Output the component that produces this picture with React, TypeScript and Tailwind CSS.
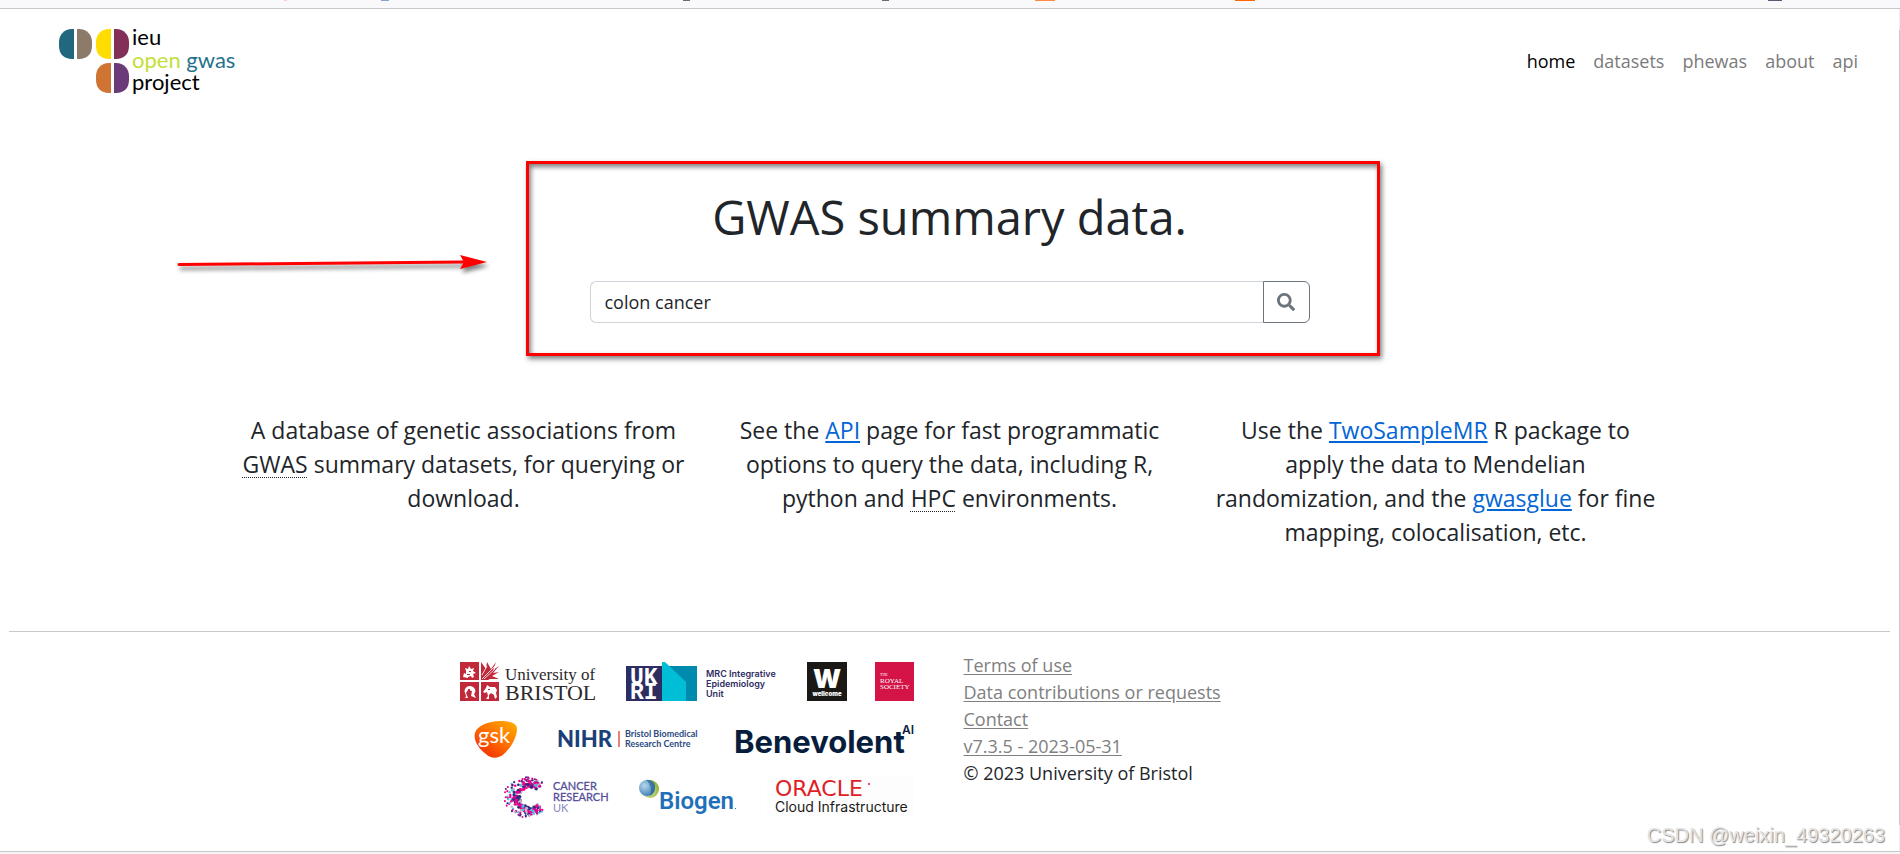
import { useState } from "react";
import { FaSearch } from "react-icons/fa";

const navLinks = [
  { label: "home", active: true },
  { label: "datasets", active: false },
  { label: "phewas", active: false },
  { label: "about", active: false },
  { label: "api", active: false },
];

const footerLinks = [
  "Terms of use",
  "Data contributions or requests",
  "Contact",
  "v7.3.5 - 2023-05-31",
];

// lower edges of the tab icons, one pixel high
const tabIcons = [
  { x: 284, w: 3, color: "#f8c9d8" },
  { x: 381, w: 8, color: "#8ba3d3" },
  { x: 683, w: 7, color: "#6b6b76" },
  { x: 882, w: 7, color: "#6b6b76" },
  { x: 1035, w: 20, color: "#ff8a47" },
  { x: 1235, w: 20, color: "#ff6600" },
  { x: 1768, w: 14, color: "#5f5870" },
];

const crukColors = ["#2e2d83", "#ec008c", "#2e2d83", "#ec008c", "#b9b9c4", "#ec008c", "#4fc3ee"];

function noise(n: number) {
  const value = Math.sin(n * 12.9898) * 43758.5453;
  return value - Math.floor(value);
}

// dots that make up the "C", spread over an arc and thinning out to the left
const crukDots = Array.from({ length: 230 }, (_, i) => {
  const angle = ((46 + noise(i + 1) * 268) * Math.PI) / 180;
  const spread = noise(i + 500);
  const left = Math.max(0, -Math.cos(angle));
  const radius = 10 + spread * 9 + left * spread * spread * 7;
  return {
    x: 26 + Math.cos(angle) * radius,
    y: 21 + Math.sin(angle) * radius,
    r: 1.8 - spread * 0.8,
    color: crukColors[i % crukColors.length],
  };
});

function SiteLogo() {
  return (
    <svg width="180" height="68" viewBox="0 0 180 68" className="overflow-visible" role="img" aria-label="ieu open gwas project">
      <path d="M15 0H13C5 0 0 6 0 13v4c0 8 5 13 13 13h2z" fill="#21687f" />
      <path d="M18 0h2c8 0 13 6 13 13v4c0 8-5 13-13 13h-2z" fill="#8c7b69" />
      <path d="M52 0h-2c-8 0-13 6-13 13v4c0 8 5 13 13 13h2z" fill="#ffdd00" />
      <path d="M55 0h2c8 0 13 6 13 13v4c0 8-5 13-13 13h-2z" fill="#822f5a" />
      <path d="M52 34h-2c-8 0-13 6-13 13v4c0 8 5 13 13 13h2z" fill="#d07434" />
      <path d="M55 34h2c8 0 13 6 13 13v4c0 8-5 13-13 13h-2z" fill="#6b3a78" />
      <g fontFamily="Lato, sans-serif" fontSize="22">
        <text x="73" y="16">ieu</text>
        <text x="73" y="39" fill="#bfe038">
          open <tspan fill="#26728b">gwas</tspan>
        </text>
        <text x="73" y="61">project</text>
      </g>
    </svg>
  );
}

function BristolLogo() {
  return (
    <svg width="138" height="40" viewBox="0 0 138 40" className="overflow-visible" role="img" aria-label="University of Bristol">
      <path d="M0 0h19v18H0zM0 20h19v19H0zM21 20h18v19H21z" fill="#c1283a" />
      <path d="M21 0l5 7 1-7 4 7 5-7-3 8 6-4-6 7 6-1-7 4 7 3h-9l-2 1h-7z" fill="#c1283a" />
      <path
        d="M3 15l1-4 2 1V9l-1-3 3 1 1-3 2 3 3-1-1 3 3 2-3 1 1 3-2 1-1-2-3 1v1zM4 36c3 0 2-3 1-5-2-5 4-9 8-6 3 2 3 5 1 7l2 4-5-2 1-5-4-1-2 3 2 5zM23 30l3-4 1-3 3 2 5 0 2 3-1 3 1 4-2 2-1-4-3-2-2 2 0 4-3 0 2-3-1-4-2 1z"
        fill="#fff"
      />
      <path d="M8 27h2v2H8zM28 27h2v1h-2zM9 9h2v1H9zM7 12h3v1H7z" fill="#c1283a" />
      <path d="M22 17L37 2M24 17l11-10M22 13l5-9" stroke="#fff" strokeWidth="0.8" />
      <g fontFamily="Liberation Serif, serif" fill="#2d2a2b">
        <text x="45" y="18" fontSize="17">University of</text>
        <text x="45" y="38" fontSize="22">BRISTOL</text>
      </g>
    </svg>
  );
}

function UkriLogo() {
  return (
    <svg width="153" height="40" viewBox="0 0 153 40" className="overflow-visible" role="img" aria-label="UKRI MRC Integrative Epidemiology Unit">
      <path d="M0 4h36v35H0z" fill="#2e2d62" />
      <path d="M36 4h35v35H36z" fill="#008aad" />
      <path d="M36 0h3l21 20v19H36z" fill="#00bed5" />
      <g fontFamily="Liberation Mono, monospace" fontWeight="700" fontSize="23" fill="#fff">
        <text x="4" y="22">UK</text>
        <text x="4" y="37">RI</text>
      </g>
      <g fontFamily="Inter, sans-serif" fontWeight="600" fontSize="9" fill="#2e2d62">
        <text x="80" y="15">MRC Integrative</text>
        <text x="80" y="25">Epidemiology</text>
        <text x="80" y="35">Unit</text>
      </g>
    </svg>
  );
}

function WellcomeLogo() {
  return (
    <svg width="40" height="40" viewBox="0 0 40 40" className="overflow-visible" role="img" aria-label="Wellcome">
      <path d="M0 0h40v39H0z" fill="#1a1915" />
      <g fontFamily="Inter, sans-serif" fontWeight="900" textAnchor="middle" fill="#fff">
        <text x="20" y="26" fontSize="26">W</text>
        <text x="20" y="34" fontSize="6">wellcome</text>
      </g>
    </svg>
  );
}

function RoyalSocietyLogo() {
  return (
    <svg width="39" height="40" viewBox="0 0 39 40" className="overflow-visible" role="img" aria-label="The Royal Society">
      <path d="M0 0h39v39H0z" fill="#d41346" />
      <g fontFamily="Liberation Serif, serif" fill="#fff">
        <text x="5" y="14" fontSize="4">THE</text>
        <text x="5" y="21" fontSize="7">ROYAL</text>
        <text x="5" y="27" fontSize="7">SOCIETY</text>
      </g>
    </svg>
  );
}

function GskLogo() {
  return (
    <svg width="56" height="40" viewBox="0 0 56 40" className="overflow-visible" role="img" aria-label="gsk">
      <defs>
        <linearGradient id="gsk" x1="1" y1="0" x2="0.2" y2="1">
          <stop offset="0" stopColor="#ffb000" />
          <stop offset="0.5" stopColor="#ff7200" />
          <stop offset="1" stopColor="#f22c00" />
        </linearGradient>
      </defs>
      <path d="M1 14C3 7 13 2 27 2c9 0 16 2 16 8 0 8-6 19-13 25-6 5-13 5-18 0C5 30-1 21 1 14z" fill="url(#gsk)" />
      <text x="4" y="24" fontFamily="Lato, sans-serif" fontSize="22" fill="#fff">gsk</text>
    </svg>
  );
}

function NihrLogo() {
  return (
    <svg width="149" height="40" viewBox="0 0 149 40" className="overflow-visible" role="img" aria-label="NIHR Bristol Biomedical Research Centre">
      <text x="-1" y="28" fontFamily="Lato, sans-serif" fontWeight="900" fontSize="22" fill="#1b3f78">NIHR</text>
      <path d="M61 12v16" stroke="#e8574a" strokeWidth="1.5" />
      <g fontFamily="Lato, sans-serif" fontWeight="700" fontSize="9" fill="#2c4a82">
        <text x="67" y="18">Bristol Biomedical</text>
        <text x="67" y="28">Research Centre</text>
      </g>
    </svg>
  );
}

function BenevolentLogo() {
  return (
    <svg width="179" height="40" viewBox="0 0 179 40" className="overflow-visible" role="img" aria-label="BenevolentAI">
      <text x="-1" y="34" fontFamily="Inter, sans-serif" fontWeight="700" fontSize="31" fill="#071d3c">Benevolent</text>
      <text x="167" y="15" fontFamily="Inter, sans-serif" fontWeight="600" fontSize="12" fill="#071d3c">AI</text>
    </svg>
  );
}

function CancerResearchLogo() {
  return (
    <svg width="107" height="42" viewBox="0 0 107 42" className="overflow-visible" role="img" aria-label="Cancer Research UK">
      {crukDots.map((dot, i) => (
        <circle key={i} cx={dot.x} cy={dot.y} r={dot.r} fill={dot.color} />
      ))}
      <g fontFamily="Lato, sans-serif" fontSize="11" fill="#56509a">
        <text x="49" y="14" stroke="#56509a" strokeWidth="0.3">CANCER</text>
        <text x="49" y="25" stroke="#56509a" strokeWidth="0.3">RESEARCH</text>
        <text x="49" y="36" fill="#8a86bb">UK</text>
      </g>
    </svg>
  );
}

function BiogenLogo() {
  return (
    <svg width="100" height="42" viewBox="0 0 100 42" className="overflow-visible" role="img" aria-label="Biogen">
      <defs>
        <radialGradient id="biogenBlue" cx="0.35" cy="0.35" r="0.7">
          <stop offset="0" stopColor="#b9d6ec" />
          <stop offset="1" stopColor="#3d7fb8" />
        </radialGradient>
        <radialGradient id="biogenGreen" cx="0.4" cy="0.6" r="0.6">
          <stop offset="0" stopColor="#f0f5d0" />
          <stop offset="1" stopColor="#8fb32f" />
        </radialGradient>
      </defs>
      <circle cx="11" cy="13" r="9" fill="url(#biogenGreen)" />
      <circle cx="8" cy="12" r="8" fill="url(#biogenBlue)" />
      <path d="M7 4c6-1 10 3 9 8 0 3-2 6-5 8 2-6 1-12-4-16z" fill="#1f5f93" opacity="0.6" />
      <text x="20" y="33" fontFamily="Roboto, sans-serif" fontWeight="600" fontSize="24" fill="#1f70b8">Biogen</text>
      <path d="M96 32h1v1h-1z" fill="#1f70b8" />
    </svg>
  );
}

function OracleLogo() {
  return (
    <svg width="147" height="42" viewBox="0 0 147 42" className="overflow-visible" role="img" aria-label="Oracle Cloud Infrastructure">
      <path d="M0 1h147v39H0z" fill="#fdfdfd" />
      <text x="8" y="20" fontFamily="DejaVu Sans, sans-serif" fontSize="22" fill="#e01e26">ORACLE</text>
      <circle cx="102" cy="8" r="1" fill="#e01e26" />
      <text x="8" y="36" fontFamily="Inter, sans-serif" fontSize="14" fill="#1a1a1a">Cloud Infrastructure</text>
    </svg>
  );
}

function Arrow() {
  return (
    <svg
      className="absolute right-full top-[88px] mr-[42px] overflow-visible drop-shadow-[2px_4px_2px_rgba(0,0,0,0.5)]"
      width="309"
      height="20"
      viewBox="0 0 309 20"
      aria-hidden="true"
    >
      <path d="M1 12.500L285 10" stroke="#f00" strokeWidth="3" strokeLinecap="round" />
      <path d="M282 3l27 7-27 7 4-7z" fill="#f00" />
    </svg>
  );
}

function TextLink({ children }: { children: string }) {
  return (
    <a href="#" className="text-[#0366d6] underline underline-offset-2">
      {children}
    </a>
  );
}

function Abbr({ title, children }: { title: string; children: string }) {
  return (
    <abbr title={title} className="underline decoration-dotted decoration-1 underline-offset-4">
      {children}
    </abbr>
  );
}

export default function App() {
  const [query, setQuery] = useState("colon cancer");

  return (
    <div className="flex min-h-screen flex-col bg-white font-['Open_Sans','Noto_Sans',sans-serif] text-lg leading-[27px] text-[#212529]">
      <div className="h-[9px] overflow-hidden border-b border-[#c8c8c8] bg-[#f9f9fb]">
        <svg width="1900" height="1" viewBox="0 0 1900 1" className="block" aria-hidden="true">
          {tabIcons.map((icon) => (
            <rect key={icon.x} x={icon.x} width={icon.w} height="1" fill={icon.color} />
          ))}
        </svg>
      </div>

      <div className="flex flex-1">
        <div className="relative flex-1">
          <header className="flex items-center justify-between pt-5 pr-8 pl-[59px]">
            <a href="#">
              <SiteLogo />
            </a>
            <nav className="flex pb-1">
              {navLinks.map((link) => (
                <a key={link.label} href="#" className={link.active ? "px-[9px] text-black" : "px-[9px] text-[#7b7b7b]"}>
                  {link.label}
                </a>
              ))}
            </nav>
          </header>

          <main>
            <section className="relative mx-auto mt-16 max-w-[720px] pt-[26px] pb-[33px]">
              <div className="pointer-events-none absolute inset-y-0 -right-[70px] -left-16 border-[3px] border-[#f00] shadow-[2px_3px_5px_rgba(0,0,0,0.5),inset_2px_3px_5px_rgba(0,0,0,0.5)]">
                <Arrow />
              </div>
              <h1 className="text-center text-[47px] leading-[60px]">GWAS summary data.</h1>
              <form className="mt-[34px] flex h-[42px]" onSubmit={(e) => e.preventDefault()}>
                <input
                  type="text"
                  aria-label="Search datasets"
                  value={query}
                  onChange={(e) => setQuery(e.target.value)}
                  className="min-w-0 flex-1 rounded-l-md border border-r-0 border-[#ced4da] px-3.5 outline-none"
                />
                <button
                  type="submit"
                  aria-label="Search"
                  className="flex w-[47px] items-center justify-center rounded-r-md border border-[#6c757d] text-[#6c757d]"
                >
                  <FaSearch size={18} />
                </button>
              </form>
            </section>

            <section className="mx-auto mt-[57px] grid max-w-[1458px] grid-cols-3 text-center text-[23px] leading-[34px]">
              <p className="px-5">
                A database of genetic associations from <Abbr title="Genome wide association study">GWAS</Abbr> summary
                datasets, for querying or download.
              </p>
              <p className="px-5">
                See the <TextLink>API</TextLink> page for fast programmatic options to query the data, including R,
                python and <Abbr title="High performance computing">HPC</Abbr> environments.
              </p>
              <p className="px-5">
                Use the <TextLink>TwoSampleMR</TextLink> R package to apply the data to Mendelian randomization, and
                the <TextLink>gwasglue</TextLink> for fine mapping, colocalisation, etc.
              </p>
            </section>
          </main>

          <footer className="mx-[9px] mt-[82px] border-t border-[#c8c8c8]">
            <div className="grid grid-cols-2 pt-5">
              <div className="flex flex-col items-end gap-[17px] pt-2.5 pr-9">
                <div className="flex gap-7">
                  <BristolLogo />
                  <UkriLogo />
                  <WellcomeLogo />
                  <RoyalSocietyLogo />
                </div>
                <div className="flex gap-7">
                  <GskLogo />
                  <NihrLogo />
                  <BenevolentLogo />
                </div>
                <div className="flex gap-7">
                  <CancerResearchLogo />
                  <BiogenLogo />
                  <OracleLogo />
                </div>
              </div>
              <div className="pl-3.5">
                {footerLinks.map((label) => (
                  <div key={label}>
                    <a href="#" className="text-[#808080] underline underline-offset-2">
                      {label}
                    </a>
                  </div>
                ))}
                <p>© 2023 University of Bristol</p>
              </div>
            </div>
          </footer>

          <span className="absolute right-3.5 bottom-0.5 font-['Liberation_Sans',Arial,sans-serif] text-xl text-[#e4e4e4] [text-shadow:1px_1px_1px_#888]">
            CSDN @weixin_49320263
          </span>
        </div>
        <div className="w-px bg-[#efefef] pt-[21px] pb-[26px]">
          <div className="h-full bg-[#c8c8c8]" />
        </div>
      </div>

      <div className="h-[3px] border-t border-[#c8c8c8] bg-[#f5f5f5]" />
    </div>
  );
}
